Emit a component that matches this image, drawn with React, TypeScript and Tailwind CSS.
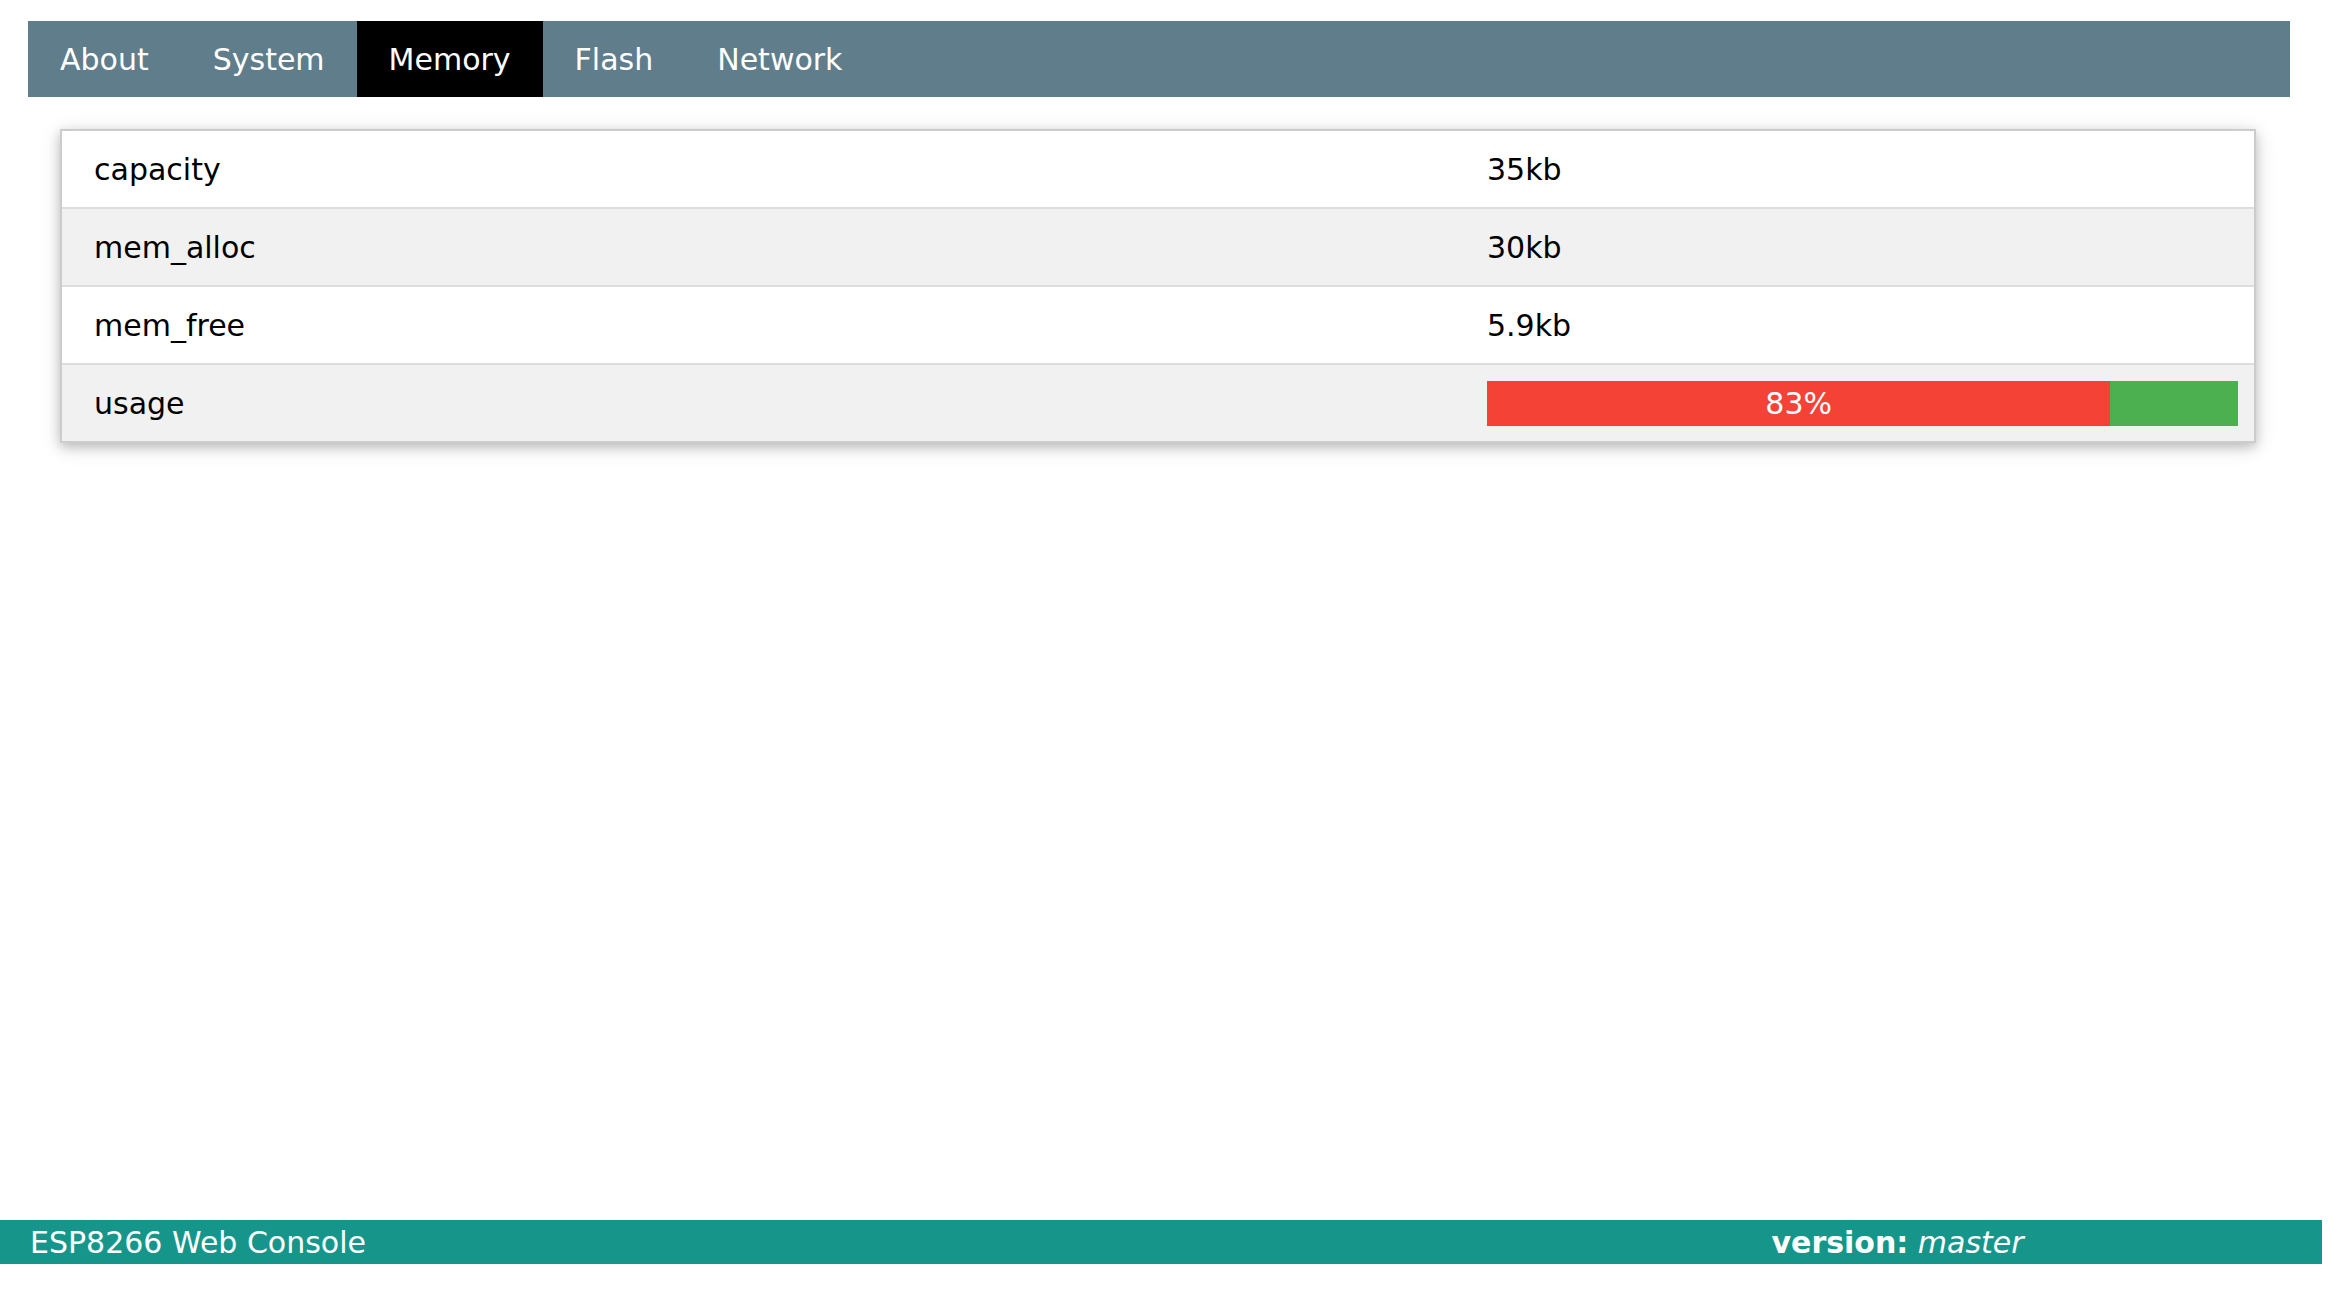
const tabs = ["About", "System", "Memory", "Flash", "Network"];

const rows = [
  { label: "capacity", value: "35kb" },
  { label: "mem_alloc", value: "30kb" },
  { label: "mem_free", value: "5.9kb" },
];

function UsageBar({ percent }: { percent: number }) {
  return (
    <div className="flex h-[45px] w-full bg-[#4caf50]">
      <div
        className="flex h-full items-center justify-center bg-[#f44336] text-white"
        style={{ width: `${percent}%` }}
      >
        {percent}%
      </div>
    </div>
  );
}

export default function App() {
  const active = "Memory";

  return (
    <div className="flex h-[1298px] w-[2322px] flex-col bg-white font-['DejaVu_Sans',Verdana,sans-serif] text-[30px] leading-[45px] text-black">
      <nav className="ml-[28px] mt-[21px] flex h-[76px] w-[2262px] bg-[#607d8b] text-white">
        {tabs.map((t) => (
          <div
            key={t}
            className={
              t === active
                ? "flex items-center bg-black px-[32px]"
                : "flex items-center px-[32px]"
            }
          >
            {t}
          </div>
        ))}
      </nav>

      <div className="ml-[60px] mt-[32px] w-[2196px] border-2 border-[#ccc] shadow-[0_4px_10px_0_rgba(0,0,0,0.18),0_4px_20px_0_rgba(0,0,0,0.14)]">
        {rows.map((r, i) => (
          <div
            key={r.label}
            className={
              i % 2 === 1
                ? "grid grid-cols-[1409px_1fr] border-b-2 border-[#ddd] bg-[#f1f1f1]"
                : "grid grid-cols-[1409px_1fr] border-b-2 border-[#ddd] bg-white"
            }
          >
            <div className="pb-[15px] pl-[32px] pr-[16px] pt-[16px]">{r.label}</div>
            <div className="px-[16px] pb-[15px] pt-[16px]">{r.value}</div>
          </div>
        ))}
        <div className="grid grid-cols-[1409px_1fr] bg-[#f1f1f1]">
          <div className="pb-[15px] pl-[32px] pr-[16px] pt-[16px]">usage</div>
          <div className="px-[16px] pb-[15px] pt-[16px]">
            <UsageBar percent={83} />
          </div>
        </div>
      </div>

      <footer className="mb-[34px] mt-auto grid h-[44px] grid-cols-[75%_25%] items-center bg-[#16968a] text-white">
        <div className="pl-[30px]">ESP8266 Web Console</div>
        <div className="pl-[30px]">
          <b>version:</b> <i>master</i>
        </div>
      </footer>
    </div>
  );
}
